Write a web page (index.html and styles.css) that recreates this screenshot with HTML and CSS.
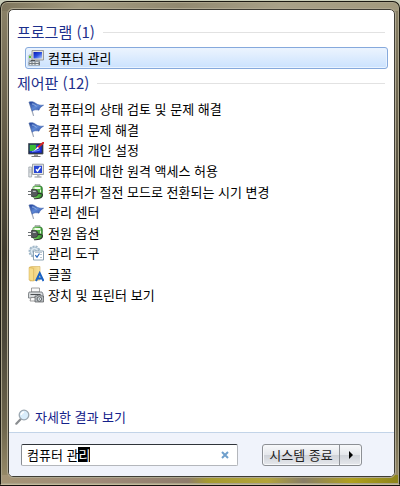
FILE: index.html
```html
<!DOCTYPE html>
<html lang="ko">
<head>
    <meta charset="UTF-8">
    <meta name="viewport" content="width=device-width, initial-scale=1.0">
    <title>시작 메뉴</title>
    <link rel="stylesheet" href="styles.css">
</head>
<body>
    <!-- 아이콘 정의 -->
    <svg class="icon-defs" aria-hidden="true">
        <defs>
            <linearGradient id="flag-fill" x1="0" y1="0" x2="1" y2="1">
                <stop offset="0" stop-color="#1f3f98"/>
                <stop offset="0.5" stop-color="#5f88d4"/>
                <stop offset="1" stop-color="#2448a4"/>
            </linearGradient>
            <linearGradient id="screen-fill" x1="0" y1="0" x2="1" y2="1">
                <stop offset="0" stop-color="#0a18b4"/>
                <stop offset="0.5" stop-color="#2c50e0"/>
                <stop offset="1" stop-color="#b8d0ff"/>
            </linearGradient>
            <linearGradient id="folder-fill" x1="0" y1="0" x2="1" y2="0">
                <stop offset="0" stop-color="#e9c468"/>
                <stop offset="1" stop-color="#f8e3a0"/>
            </linearGradient>
            <linearGradient id="battery-fill" x1="0" y1="0" x2="1" y2="0">
                <stop offset="0" stop-color="#c4f0b4"/>
                <stop offset="0.4" stop-color="#62c44c"/>
                <stop offset="1" stop-color="#2a8c28"/>
            </linearGradient>
            <symbol id="icon-manage" viewBox="0 0 16 16">
                <path d="M1 5h4v6H1z" fill="#d8dce0" stroke="#8b9298" stroke-width=".6"/>
                <path d="M1 6h2v2H1z" fill="#58c435"/>
                <path d="M4 .5h11.5v9.5H4z" fill="#e4e2d8" stroke="#85888c" stroke-width=".8"/>
                <path d="M5.5 2h8.5v6.5H5.5z" fill="url(#screen-fill)"/>
                <path d="M8 10h4v1.5H8z" fill="#9ba0a4"/>
                <path d="M.5 11.5h11.5v4H.5z" fill="#747b80"/>
                <path d="M1.5 12.5h2m1 0h2m1 0h3M1.5 14.5h2m1 0h2m1 0h3" stroke="#e4e8e8"/>
                <path d="M3 11.5v-1h4v1" fill="none" stroke="#4c5054"/>
            </symbol>
            <symbol id="icon-flag" viewBox="0 0 16 16">
                <path d="M1.2 1.2 5.5 14.5" stroke="#a3abba" stroke-width="1.2" stroke-linecap="round"/>
                <path d="M1.2 1C4 .2 6 .8 8 2.5c2 1.5 4 1.8 7.6 1.7-2.4 1.2-3.6 2.6-4.7 5C9 8.6 6.2 8.4 4.2 10.2z" fill="url(#flag-fill)" stroke="#3558a8" stroke-width=".5"/>
                <path d="M4 3c2-.2 2.5 1.5 4.5 2.2" fill="none" stroke="#9dbbea" stroke-width=".9"/>
            </symbol>
            <symbol id="icon-personal" viewBox="0 0 16 16">
                <path d="M.5 1.5h14.5v10.5H.5z" fill="#20283c" stroke="#4c5460" stroke-width=".8"/>
                <path d="M1.7 2.7h12v8h-12z" fill="#1c2fd8"/>
                <path d="M1.7 2.7h7c-2 2 1 4-2 5.500-1 1-3 .5-5 1z" fill="#3cbc38"/>
                <path d="M4 9.800c3-2 5 0 8-2" fill="none" stroke="#6f8cf4" stroke-width="1.200"/>
                <path d="m15.3.7-5.800 5" stroke="#d92828" stroke-width="2" stroke-linecap="round"/>
                <path d="m9.800 4.700-4.300 4.500 5.500-3z" fill="#fff"/>
                <path d="M6 12h4v2H6z" fill="#999"/>
                <path d="M3.500 14.500h9" stroke="#777"/>
            </symbol>
            <symbol id="icon-remote" viewBox="0 0 16 16">
                <path d="M.8 4h2.800v10H.8z" fill="#e1e5e8" stroke="#929ba2" stroke-width=".7"/>
                <path d="M1 7h2.500M1 9h2.500" stroke="#9da5ac" stroke-width=".6"/>
                <path d="M4.500 1.200h11v10.300h-11z" fill="#e6e6e2" stroke="#878d94" stroke-width=".8"/>
                <path d="M6 2.700h8v7.200H6z" fill="#2a48d4"/>
                <path d="m8 6.200 1.500 1.800 3-4" fill="none" stroke="#fff" stroke-width="1.400"/>
                <path d="M9 11.500h2.500v2H9z" fill="#b4babf"/>
                <path d="M6.500 14h7" stroke="#858c94" stroke-width="1.200"/>
            </symbol>
            <symbol id="icon-power" viewBox="0 0 16 16">
                <path d="M7 .5h5v2H7z" fill="#e4e8ea" stroke="#777" stroke-width=".5"/>
                <rect x="4.500" y="1.800" width="10" height="12.500" rx="3" fill="url(#battery-fill)" stroke="#4a7c4c" stroke-width=".6"/>
                <path d="M6.500 4h6" stroke="#effbe8" stroke-width="2"/>
                <path d="M12.500 5.500v3" stroke="#e0f6d4" stroke-width="1.200"/>
                <path d="M9.500 9.500c4-.4 6 .5 4.500 2.800-1.200 1.900-4 2.700-8 2.400" fill="none" stroke="#333" stroke-width="1.100"/>
                <path d="M3.500 5.500h3c2.500 0 3.500 1.500 3.500 3.500s-1 3.500-3.500 3.500h-3z" fill="#55595c" stroke="#191c1e" stroke-width=".6"/>
                <path d="M0 7.500h3.500M0 10.500h3.500" stroke="#6a6f72" stroke-width="1.200"/>
                <path d="M4.800 7.300h3" stroke="#d5dadd"/>
            </symbol>
            <symbol id="icon-tools" viewBox="0 0 16 16">
                <circle cx="6.500" cy="6.500" r="5" fill="#e4edf4" stroke="#a0b7c8" stroke-width="2" stroke-dasharray="2 1"/>
                <circle cx="6.500" cy="6.500" r="4.200" fill="#dce8f1" stroke="#9cb4c5" stroke-width=".7"/>
                <circle cx="6.500" cy="6.500" r="1.800" fill="#fff" stroke="#8da7ba" stroke-width=".8"/>
                <path d="M5.500 6h10v9h-10z" fill="#fff" stroke="#829bad" stroke-width=".9"/>
                <path d="m7.300 10.200 1.700 2 2.500-3.700" fill="none" stroke="#2868bc" stroke-width="1.200"/>
                <path d="M12 9.500h2M12 12.500h2M7 7.500h7" stroke="#a8b8c4" stroke-width=".8"/>
            </symbol>
            <symbol id="icon-fonts" viewBox="0 0 16 16">
                <path d="M1.500 1 4 .5h8v13.500l-10 1z" fill="url(#folder-fill)" stroke="#d3b05a" stroke-width=".6"/>
                <path d="m1 1.500 4.500 1V15L1 14z" fill="#f6dc8a" stroke="#d3ac50" stroke-width=".5"/>
                <path d="m8 15 3.700-8 3.800 8M9.300 12.500h4.800" fill="none" stroke="#1a62c4" stroke-width="2"/>
            </symbol>
            <symbol id="icon-printer" viewBox="0 0 16 16">
                <path d="M3.500 1h8v4h-8z" fill="#fafafa" stroke="#888" stroke-width=".8"/>
                <path d="M1 5h13l1 2v4H.5V7z" fill="#d8dbdd" stroke="#6b7073" stroke-width=".8"/>
                <path d="M2.500 7.500h10" stroke="#4a4e51" stroke-width="1.200"/>
                <path d="M3 10.500h7V14H2z" fill="#fafafa" stroke="#777" stroke-width=".7"/>
                <path d="M7 9h2l.8-1h2.800l.8 1h2.100v6H7z" fill="#b8bdc0" stroke="#505457" stroke-width=".7"/>
                <circle cx="11.300" cy="12" r="2.200" fill="#f2f6f8" stroke="#3c4144" stroke-width=".8"/>
                <circle cx="11.300" cy="12" r=".8" fill="#536471"/>
            </symbol>
            <symbol id="icon-search" viewBox="0 0 16 16">
                <path d="m1.300 14.700 4.500-4.800" stroke="#8a8d90" stroke-width="2.200" stroke-linecap="round"/>
                <circle cx="9" cy="6" r="4.800" fill="#d9edfb" stroke="#9ba7b1" stroke-width="1.300"/>
                <path d="M6.200 6A3 3 0 0 1 9 3.200" fill="none" stroke="#fff" stroke-width="1.500"/>
            </symbol>
        </defs>
    </svg>

    <div class="start-menu">
        <div class="panel">
            <div class="results">
                <h2 class="group-title">프로그램 (1)</h2>
                <ul class="program-list">
                    <li><a class="item selected" href="#"><svg class="icon"><use href="#icon-manage"/></svg>컴퓨터 관리</a></li>
                </ul>
                <h2 class="group-title">제어판 (12)</h2>
                <ul class="control-list">
                    <li><a class="item" href="#"><svg class="icon"><use href="#icon-flag"/></svg>컴퓨터의 상태 검토 및 문제 해결</a></li>
                    <li><a class="item" href="#"><svg class="icon"><use href="#icon-flag"/></svg>컴퓨터 문제 해결</a></li>
                    <li><a class="item" href="#"><svg class="icon"><use href="#icon-personal"/></svg>컴퓨터 개인 설정</a></li>
                    <li><a class="item" href="#"><svg class="icon"><use href="#icon-remote"/></svg>컴퓨터에 대한 원격 액세스 허용</a></li>
                    <li><a class="item" href="#"><svg class="icon"><use href="#icon-power"/></svg>컴퓨터가 절전 모드로 전환되는 시기 변경</a></li>
                    <li><a class="item" href="#"><svg class="icon"><use href="#icon-flag"/></svg>관리 센터</a></li>
                    <li><a class="item" href="#"><svg class="icon"><use href="#icon-power"/></svg>전원 옵션</a></li>
                    <li><a class="item" href="#"><svg class="icon"><use href="#icon-tools"/></svg>관리 도구</a></li>
                    <li><a class="item" href="#"><svg class="icon"><use href="#icon-fonts"/></svg>글꼴</a></li>
                    <li><a class="item" href="#"><svg class="icon"><use href="#icon-printer"/></svg>장치 및 프린터 보기</a></li>
                </ul>
            </div>
            <a class="more" href="#"><svg class="icon"><use href="#icon-search"/></svg>자세한 결과 보기</a>
            <div class="footer">
                <div class="search-box">
                    <input type="text" id="search" class="search-input" value="컴퓨터 관리" aria-label="검색">
                    <button type="button" class="clear" aria-label="지우기">
                        <svg viewBox="0 0 8 8"><path d="m1 1 6 6M7 1 1 7"/></svg>
                    </button>
                </div>
                <div class="shutdown">
                    <button type="button" class="shutdown-main">시스템 종료</button>
                    <button type="button" class="shutdown-more" aria-label="종료 옵션">
                        <svg viewBox="0 0 4 8"><path d="M0 0l4 4-4 4z"/></svg>
                    </button>
                </div>
            </div>
        </div>
    </div>

    <script>
        // 입력 중인 마지막 글자 선택
        const search = document.getElementById('search');
        search.focus();
        search.setSelectionRange(search.value.length - 1, search.value.length);
    </script>
</body>
</html>
```
FILE: styles.css
```css
* {
    box-sizing: border-box;
}
body {
    margin: 0;
    padding-top: 1px;
    min-height: 100vh;
    display: flex;
    background: linear-gradient(#c9cdb8 0, #c9cdb8 10px, #15110d 10px);
    font-family: 'Noto Sans CJK KR', sans-serif;
    font-size: 13px;
    line-height: 20px;
    color: #000;
}
ul {
    margin: 0;
    padding: 0;
    list-style: none;
}
a {
    color: inherit;
    text-decoration: none;
}
button {
    font: inherit;
    padding: 0;
    cursor: pointer;
}
.icon-defs {
    position: absolute;
    width: 0;
    height: 0;
}
.icon {
    width: 16px;
    height: 16px;
    flex: none;
}
.start-menu {
    flex: 1;
    display: flex;
    margin-bottom: 1px;
    padding: 7px 4px 7px 7px;
    border: 1px solid #1c1a12;
    border-bottom-color: #c5b99b;
    border-radius: 7px 7px 0 0;
    box-shadow: inset 0 0 0 1px #aaa38a;
    background:
        linear-gradient(90deg, #a59576, #a08a78 25%, #8f7d6c 47%, #a59a30 52%, #b3a53c 67%, #897e68 76%, #b0a01e 88%, #8d841c) bottom / 100% 9px no-repeat,
        linear-gradient(90deg, #7e765d, #a39b80 20%, #918970 45%, #a8a188 70%, #a29a7e) top / 100% 9px no-repeat,
        linear-gradient(#8c8368, #6b634e 22%, #3f3b2e 52%, #4b4739 70%, #6e664d 88%, #9c8f6c);
}
.panel {
    flex: 1;
    display: flex;
    flex-direction: column;
    border: 1px solid #3f3d35;
    outline: 1px solid #b0a992;
    border-radius: 5px;
    overflow: hidden;
    background: #fff;
}
.results {
    flex: 1;
    padding: 11px 8px 0;
}
.group-title {
    display: flex;
    align-items: center;
    gap: 8px;
    margin: 0;
    font-size: 15px;
    font-weight: 400;
    line-height: 22px;
    color: #1c2f8c;
}
.group-title::after {
    content: '';
    flex: 1;
    height: 1px;
    margin-right: 1px;
    background: #e2e2e2;
}
.program-list {
    margin: 4px -2px 3px 8px;
}
.control-list {
    display: grid;
    grid-template-rows: repeat(10, 1fr);
    height: 206px;
    margin: 5px 0 0 8px;
}
.item {
    display: flex;
    align-items: center;
    gap: 4px;
    height: 100%;
    padding-left: 3px;
}
.selected {
    height: 22px;
    padding-left: 2px;
    border: 1px solid #86a9dc;
    border-radius: 3px;
    box-shadow: inset 0 0 0 1px #e9f3ff;
    background: linear-gradient(#ecf4fe, #cbe2fe);
}
.more {
    display: flex;
    align-items: center;
    gap: 4px;
    margin-bottom: 5px;
    padding: 0 6px;
    color: #14218a;
}
.footer {
    display: flex;
    align-items: center;
    gap: 24px;
    height: 44px;
    padding: 0 32px 0 12px;
    border-top: 1px solid #c3d4e8;
    background: #f0f3fb;
}
.search-box {
    flex: 1;
    display: flex;
    align-items: center;
    height: 22px;
    border: 1px solid #b4b7bc;
    border-top-color: #30343a;
    border-left-color: #888c92;
    border-radius: 2px;
    background: #fff;
}
.search-input {
    flex: 1;
    min-width: 0;
    height: 15px;
    padding: 0 0 0 5px;
    border: 0;
    outline: 0;
    background: none;
    font: inherit;
    line-height: 15px;
    color: #000;
}
.search-input::selection {
    background: #000;
    color: #fff;
}
.clear {
    width: 24px;
    border: 0;
    background: none;
}
.clear svg {
    display: block;
    width: 8px;
    height: 8px;
    margin: 0 auto;
    stroke: #6f9fcc;
    stroke-width: 2;
}
.shutdown {
    display: flex;
    height: 22px;
    border: 1px solid #8d9095;
    border-radius: 3px;
    background: linear-gradient(#f8f9fb, #e5e7eb 48%, #d0d3d9 52%, #e6e8ec);
    box-shadow: inset 0 0 0 1px #f7f8fa;
}
.shutdown-main,
.shutdown-more {
    border: 0;
    background: none;
    color: #222;
}
.shutdown-main {
    width: 76px;
}
.shutdown-more {
    width: 22px;
    border-left: 1px solid #8d9095;
}
.shutdown-more svg {
    display: block;
    width: 4px;
    height: 8px;
    margin: 0 auto;
}
```
